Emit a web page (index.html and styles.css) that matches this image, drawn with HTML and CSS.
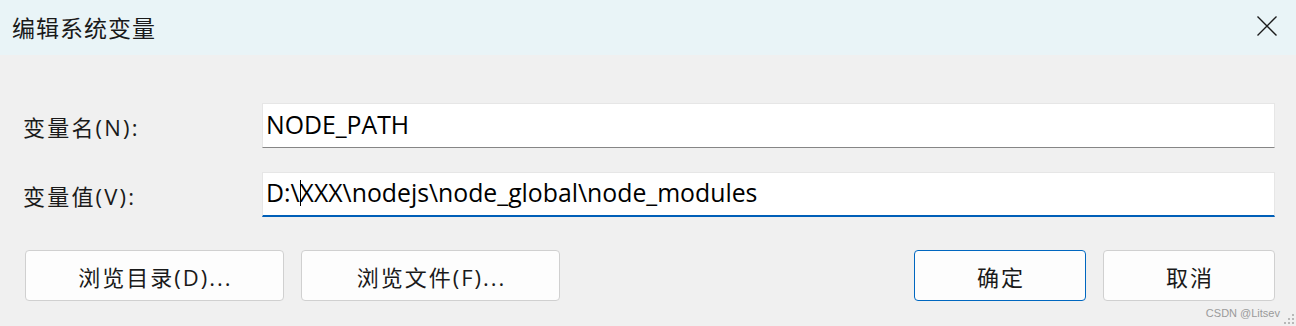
FILE: index.html
```html
<!DOCTYPE html>
<html lang="zh-CN">
<head>
<meta charset="utf-8">
<title>编辑系统变量</title>
<link rel="stylesheet" href="styles.css">
</head>
<body>
<div class="dialog">
  <div class="titlebar">
    <span class="title">编辑系统变量</span>
    <svg class="close" width="20" height="20" viewBox="0 0 20 20"><path d="M0.5 0.5 L19.5 19.5 M19.5 0.5 L0.5 19.5" stroke="#1b1b1b" stroke-width="1.4" fill="none"/></svg>
  </div>
  <div class="content">
    <div class="fields">
      <label class="label">变量名(N):</label>
      <div class="input"><span class="value">NODE_PATH</span></div>
      <label class="label">变量值(V):</label>
      <div class="input focused"><span class="value">D:\<span class="caret"></span>XXX\nodejs\node_global\node_modules</span></div>
    </div>
    <div class="buttons">
      <div class="btn-group">
        <button class="btn wide">浏览目录(D)...</button>
        <button class="btn wide">浏览文件(F)...</button>
      </div>
      <div class="btn-group">
        <button class="btn primary">确定</button>
        <button class="btn">取消</button>
      </div>
    </div>
    <div class="watermark">CSDN @Litsev</div>
    <div class="grip">
      <i></i><i></i><i></i><i></i><i></i><i></i>
    </div>
  </div>
</div>
</body>
</html>
```

FILE: styles.css
```css
* { box-sizing: border-box; }
html, body { margin: 0; padding: 0; }
body {
  width: 1296px;
  height: 326px;
  overflow: hidden;
  font-family: "Open Sans", "Noto Sans CJK SC", sans-serif;
  color: #000;
  background: #f0f0f0;
}
.dialog {
  width: 1296px;
  height: 326px;
  display: flex;
  flex-direction: column;
}
.titlebar {
  height: 55px;
  background: #e9f4f7;
  display: flex;
  align-items: center;
  justify-content: space-between;
  padding: 0 19px 0 12px;
}
.title {
  font-family: "Noto Sans CJK SC", sans-serif;
  font-size: 23px;
  color: #1a1a1a;
  letter-spacing: 1px;
  margin-top: -2px;
}
.close { display: block; margin-top: -4px; }
.content {
  flex: 1;
  position: relative;
  padding: 48px 21px 0 23px;
}
.fields {
  display: grid;
  grid-template-columns: 239px 1013px;
  grid-template-rows: 45px 45px;
  row-gap: 24px;
  align-items: center;
}
.label {
  font-family: "Open Sans", "Noto Sans CJK SC", sans-serif;
  font-size: 22px;
  letter-spacing: 2.2px;
  color: #1a1a1a;
}
.input {
  height: 45px;
  background: #fff;
  border: 1px solid #e6e6e6;
  border-bottom: 1px solid #868686;
  font-family: "Open Sans", "Noto Sans CJK SC", sans-serif;
  font-size: 24.8px;
  padding: 0 0 0 3px;
  white-space: pre;
  display: flex;
  align-items: center;
}
.value {
  display: flex;
  align-items: center;
  margin-top: -4px;
}
.input.focused {
  border-bottom: 2px solid #005fb8;
}
.caret {
  display: inline-block;
  width: 1px;
  height: 26px;
  background: #000;
  margin: 2px -1px 0 0;
}
.buttons {
  margin-top: 33px;
  display: flex;
  justify-content: space-between;
  padding-left: 2px;
}
.btn-group { display: flex; gap: 17px; }
.btn {
  height: 51px;
  width: 172px;
  background: #fdfdfd;
  border: 1px solid #d0d0d0;
  border-radius: 4px;
  font-family: "Open Sans", "Noto Sans CJK SC", sans-serif;
  font-size: 22px;
  letter-spacing: 2px;
  color: #1a1a1a;
  padding: 0 0 0 2px;
  margin: 0;
}
.btn.wide { width: 259px; }
.btn.primary { border-color: #0067c0; }
.watermark {
  position: absolute;
  right: 16px;
  bottom: 7px;
  font-family: "Liberation Sans", sans-serif;
  font-size: 11px;
  color: #9a9a9a;
}
.grip {
  position: absolute;
  right: 2px;
  bottom: 2px;
  width: 10px;
  height: 10px;
}
.grip i {
  position: absolute;
  width: 2px;
  height: 2px;
  background: #b8b8b8;
}
.grip i:nth-child(1) { right: 0; bottom: 8px; }
.grip i:nth-child(2) { right: 4px; bottom: 4px; }
.grip i:nth-child(3) { right: 0; bottom: 4px; }
.grip i:nth-child(4) { right: 8px; bottom: 0; }
.grip i:nth-child(5) { right: 4px; bottom: 0; }
.grip i:nth-child(6) { right: 0; bottom: 0; }
```
